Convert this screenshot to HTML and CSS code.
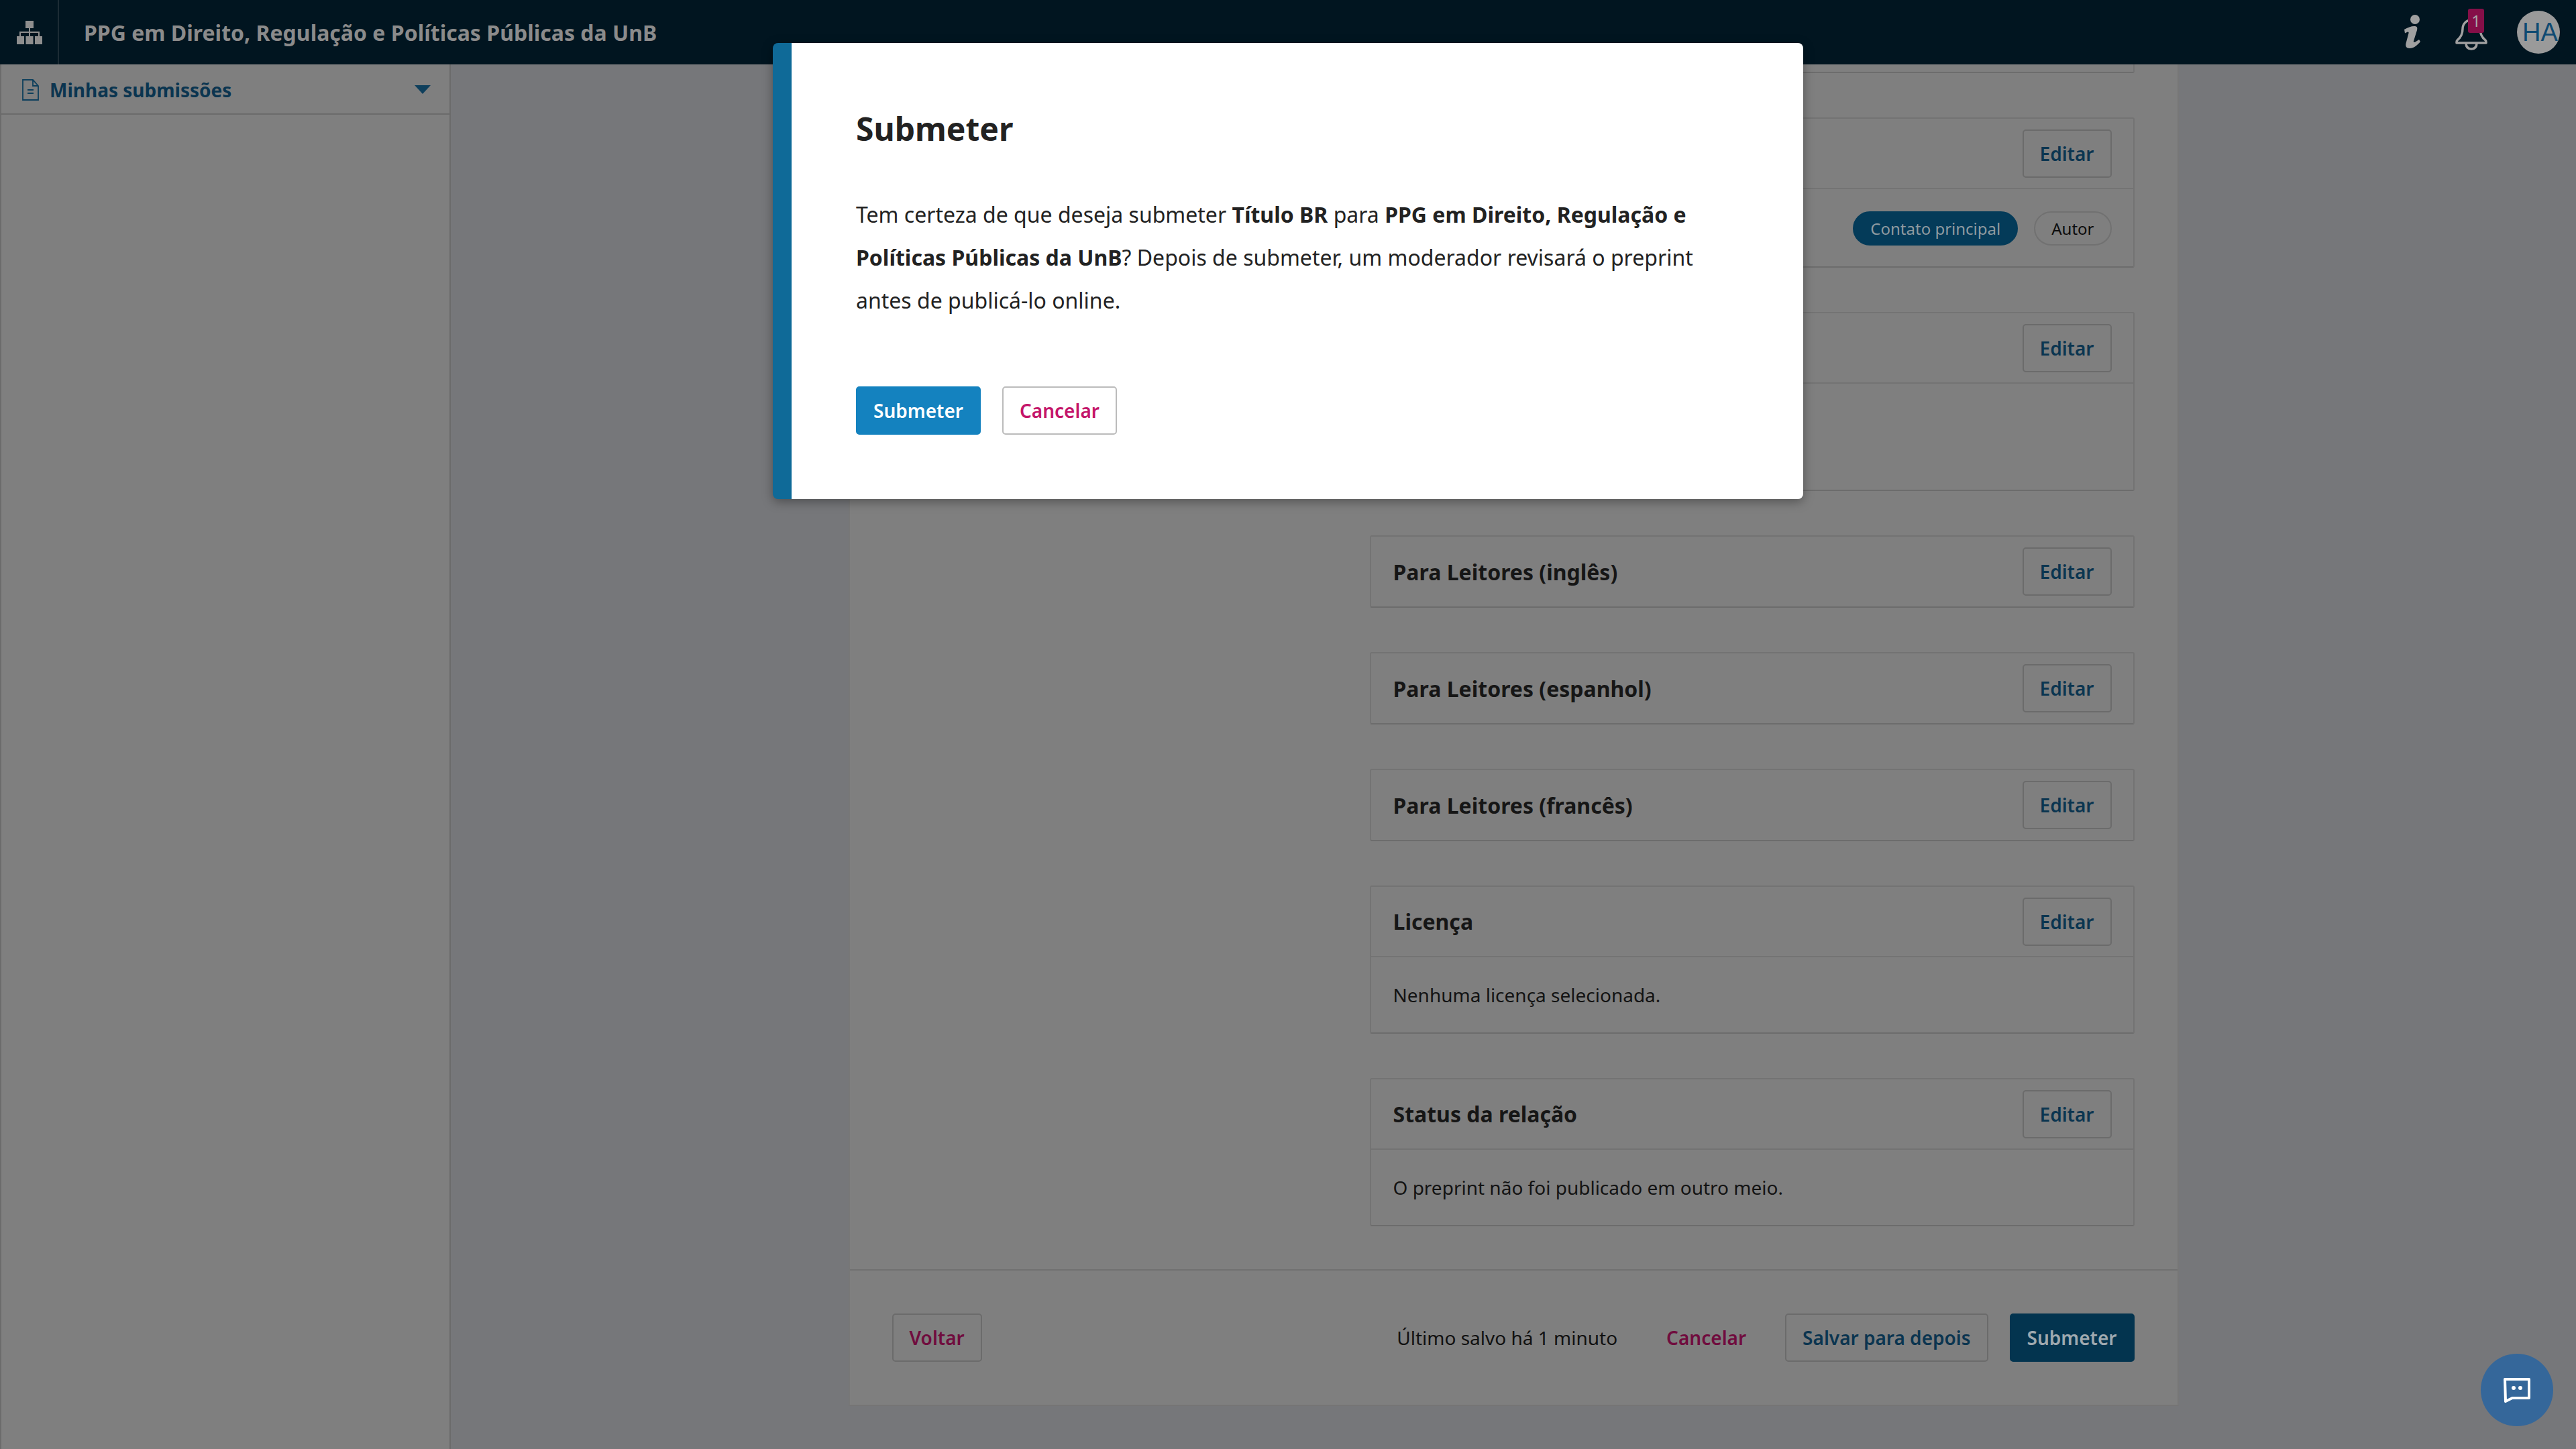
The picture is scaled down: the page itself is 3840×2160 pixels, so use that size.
FILE: index.html
```html
<!DOCTYPE html>
<html lang="pt-BR">
  <head>
    <meta charset="UTF-8" />
    <title>Submeter</title>
    <link rel="stylesheet" href="styles.css">
  </head>
  <body>
    <div class="app">
      <header class="topbar">
        <div class="topbar-sitemap">
          <svg width="38" height="35" viewBox="0 0 38 35" fill="#8e8e8e">
            <rect x="13" y="0" width="12" height="11"/>
            <rect x="0" y="23" width="11" height="12"/>
            <rect x="13.5" y="23" width="11" height="12"/>
            <rect x="27" y="23" width="11" height="12"/>
            <path d="M18 11h2v5h14v7h-2v-5H20v5h-2v-5H6v5H4v-7h14z"/>
          </svg>
        </div>
        <div class="topbar-title">PPG em Direito, Regulação e Políticas Públicas da UnB</div>
        <div class="topbar-tools">
          <svg class="icon-info" width="24" height="52" viewBox="0 0 24 52" fill="#a0a0a0">
            <circle cx="16" cy="7" r="7"/>
            <path d="M0 22c5-3 10-5 15-5 4 0 5 2 4 6l-5 16c-.6 2 .5 2.500 2.500 1.500L22 37l2 3c-5 6-10 10-16 10-5 0-6.500-3-5.500-7.500l4-15c.4-1.800-.5-2.400-2-1.800L1 27.500z"/>
          </svg>
          <div class="bell">
            <svg width="48" height="48" viewBox="0 0 48 48" fill="none" stroke="#a0a0a0" stroke-width="3.500" stroke-linejoin="round">
              <path d="M24 3c-8 0-13 6-13 13 0 8-3 13-8 17-1 1-1 2-1 3v1h44v-1c0-1 0-2-1-3-5-4-8-9-8-17 0-7-5-13-13-13z"/>
              <path d="M16 37c0 6 3 9 8 9s8-3 8-9"/>
            </svg>
            <span class="bell-count">1</span>
          </div>
          <div class="avatar">HA</div>
        </div>
      </header>

      <div class="workspace">
        <nav class="sidebar">
          <div class="side-row">
            <svg class="side-doc" width="27" height="32" viewBox="0 0 27 32" fill="none" stroke="#0e3f5c" stroke-width="1.800">
              <path d="M2 1h15l8 9v21H2z"/>
              <path d="M17 1v9h8"/>
              <path d="M9 16h9M9 21h9"/>
            </svg>
            <span class="side-label">Minhas submissões</span>
            <span class="side-caret"></span>
          </div>
        </nav>

        <main class="main">
          <div class="panel">
            <div class="review">
              <div class="card card-stub"></div>

              <section class="card card-contrib">
                <div class="card-head"><button class="btn btn-edit">Editar</button></div>
                <div class="card-pills">
                  <span class="pill pill-main">Contato principal</span>
                  <span class="pill">Autor</span>
                </div>
              </section>

              <section class="card card-blank">
                <div class="card-head"><button class="btn btn-edit">Editar</button></div>
              </section>

              <section class="card">
                <div class="card-head head-only">
                  <h3>Para Leitores (inglês)</h3>
                  <button class="btn btn-edit">Editar</button>
                </div>
              </section>
              <section class="card">
                <div class="card-head head-only">
                  <h3>Para Leitores (espanhol)</h3>
                  <button class="btn btn-edit">Editar</button>
                </div>
              </section>
              <section class="card">
                <div class="card-head head-only">
                  <h3>Para Leitores (francês)</h3>
                  <button class="btn btn-edit">Editar</button>
                </div>
              </section>

              <section class="card">
                <div class="card-head">
                  <h3>Licença</h3>
                  <button class="btn btn-edit">Editar</button>
                </div>
                <div class="card-body">Nenhuma licença selecionada.</div>
              </section>
              <section class="card">
                <div class="card-head">
                  <h3>Status da relação</h3>
                  <button class="btn btn-edit">Editar</button>
                </div>
                <div class="card-body">O preprint não foi publicado em outro meio.</div>
              </section>
            </div>

            <footer class="panel-foot">
              <button class="btn btn-back">Voltar</button>
              <div class="foot-right">
                <span class="saved">Último salvo há 1 minuto</span>
                <button class="btn btn-link">Cancelar</button>
                <button class="btn btn-edit">Salvar para depois</button>
                <button class="btn btn-primary">Submeter</button>
              </div>
            </footer>
          </div>
        </main>
      </div>
    </div>

    <div class="modal-layer">
      <div class="modal">
        <h2>Submeter</h2>
        <p>Tem certeza de que deseja submeter <b>Título BR</b> para <b>PPG em Direito, Regulação e Políticas Públicas da UnB</b>? Depois de submeter, um moderador revisará o preprint antes de publicá-lo online.</p>
        <div class="modal-actions">
          <button class="btn modal-ok">Submeter</button>
          <button class="btn modal-cancel">Cancelar</button>
        </div>
      </div>
    </div>

    <div class="chat">
      <svg width="42" height="38" viewBox="0 0 42 38" fill="none">
        <path d="M3 3h36v28H14L4 36z" stroke="#fff" stroke-width="4" stroke-linejoin="round"/>
        <circle cx="16" cy="16" r="3" fill="#fff"/>
        <circle cx="26" cy="16" r="3" fill="#fff"/>
      </svg>
    </div>
  </body>
</html>
```

FILE: styles.css
```css
html,
body {
  margin: 0;
  height: 100%;
  overflow: hidden;
}
body {
  background-color: #76777a;
  color: #111;
  font-family: "Noto Sans", "Open Sans", sans-serif;
  font-size: 28px;
}
button {
  font-family: inherit;
}
h2,
h3,
p {
  margin: 0;
}

.app {
  height: 2160px;
  display: flex;
  flex-direction: column;
}

/* top bar */
.topbar {
  height: 96px;
  flex: none;
  display: flex;
  align-items: center;
  background-color: #011520;
}
.topbar-sitemap {
  width: 88px;
  height: 96px;
  padding-left: 25px;
  box-sizing: border-box;
  display: flex;
  align-items: center;
  border-right: 2px solid #1c2c35;
}
.topbar-title {
  margin-left: 37px;
  font-size: 32px;
  font-weight: 700;
  color: #8b8b8b;
}
.topbar-tools {
  margin-left: auto;
  margin-right: 24px;
  display: flex;
  align-items: center;
}
.icon-info {
  margin-right: 52px;
}
.bell {
  position: relative;
  width: 48px;
  height: 48px;
  margin-right: 44px;
  margin-top: 6px;
}
.bell-count {
  position: absolute;
  left: 19px;
  top: -14px;
  width: 24px;
  height: 36px;
  border-radius: 3px;
  background-color: #850f48;
  color: #a8a8a8;
  font-size: 24px;
  line-height: 36px;
  text-align: center;
}
.avatar {
  width: 64px;
  height: 64px;
  border-radius: 50%;
  overflow: hidden;
  background-color: #9a9a9a;
  color: #0f4a72;
  font-family: "Liberation Sans", sans-serif;
  font-size: 38px;
  line-height: 64px;
  padding-left: 8px;
  box-sizing: border-box;
  white-space: nowrap;
}

.workspace {
  flex: 1;
  display: flex;
  min-height: 0;
}

/* side menu */
.sidebar {
  width: 672px;
  flex: none;
  box-sizing: border-box;
  background-color: #7f7f7f;
  border-left: 2px solid #6b6b6b;
  border-right: 2px solid #6b6b6b;
}
.side-row {
  height: 75px;
  box-sizing: border-box;
  display: flex;
  align-items: center;
  padding: 2px 28px 0 30px;
  border-bottom: 2px solid #6b6b6b;
}
.side-doc {
  margin-right: 15px;
}
.side-label {
  font-size: 28px;
  font-weight: 700;
  color: #0b3550;
}
.side-caret {
  margin-left: auto;
  border-left: 12px solid transparent;
  border-right: 12px solid transparent;
  border-top: 13px solid #0e3f5c;
}

/* review panel */
.main {
  flex: 1;
  display: flex;
  justify-content: center;
  align-items: flex-start;
}
.panel {
  width: 1983px;
  box-sizing: border-box;
  background-color: #7f7f7f;
  border-left: 2px solid #777;
  border-right: 2px solid #777;
  border-bottom: 2px solid #757575;
}
.review {
  width: 1140px;
  margin-left: auto;
  margin-right: 64px;
  display: flex;
  flex-direction: column;
  gap: 66px;
}
.card {
  border: 2px solid #737373;
  border-bottom-color: #6c6c6c;
  border-radius: 3px;
}
.card-stub {
  height: 11px;
  border-top: 0;
  border-radius: 0 0 3px 3px;
}
.card-contrib {
  height: 224px;
  box-sizing: border-box;
}
.card-blank {
  height: 267px;
  box-sizing: border-box;
}
.card-head {
  height: 105px;
  box-sizing: border-box;
  display: flex;
  align-items: center;
  padding: 0 32px 0 33px;
  border-bottom: 2px solid #737373;
}
.card-head .btn {
  margin-left: auto;
}
.head-only {
  height: 104px;
  border-bottom: 0;
}
.card-head h3 {
  font-size: 32px;
  font-weight: 700;
  color: #161616;
}
.card-body {
  padding: 24px 32px 24px 33px;
  line-height: 64px;
  color: #131313;
}
.card-pills {
  display: flex;
  justify-content: flex-end;
  gap: 24px;
  padding: 33px 32px 0;
}
.pill {
  height: 51px;
  box-sizing: border-box;
  padding: 0 24px;
  border: 2px solid #717171;
  border-radius: 26px;
  font-size: 24px;
  line-height: 47px;
  color: #0c0c0c;
}
.pill-main {
  background-color: #043b59;
  border-color: #043b59;
  color: #8f9aa0;
}

/* buttons */
.btn {
  height: 72px;
  box-sizing: border-box;
  padding: 0 24px;
  border: 2px solid #6b6b6b;
  border-radius: 5px;
  background-color: transparent;
  font-size: 28px;
  font-weight: 600;
}
.btn-edit {
  color: #0b3550;
}
.btn-back {
  color: #700c3e;
}
.btn-link {
  border-color: transparent;
  color: #700c3e;
}
.btn-primary {
  background-color: #03344f;
  border-color: #03344f;
  color: #9fa9af;
}

.panel-foot {
  margin-top: 64px;
  border-top: 2px solid #707070;
  padding: 64px 64px 64px 63px;
  display: flex;
  align-items: center;
}
.foot-right {
  margin-left: auto;
  display: flex;
  align-items: center;
  gap: 32px;
}
.saved {
  color: #111;
  margin-right: 15px;
}

/* submit dialog */
.modal-layer {
  position: absolute;
  left: 0;
  top: 0;
  right: 0;
  display: flex;
  justify-content: center;
  padding-top: 64px;
}
.modal {
  width: 1536px;
  height: 680px;
  box-sizing: border-box;
  padding: 96px 96px 0;
  background-color: #fff;
  border-left: 28px solid #0f6a98;
  border-radius: 8px;
  box-shadow: 0 4px 16px rgba(0, 0, 0, 0.35);
  color: #222;
}
.modal h2 {
  font-size: 48px;
  line-height: 64px;
  font-weight: 700;
}
.modal p {
  margin-top: 64px;
  font-size: 32px;
  line-height: 64px;
}
.modal-actions {
  margin-top: 96px;
  display: flex;
  gap: 32px;
}
.modal-ok {
  background-color: #1482bf;
  border-color: #1482bf;
  color: #fff;
}
.modal-cancel {
  background-color: #fff;
  border-color: #bbb;
  color: #c4156a;
}

.chat {
  position: absolute;
  right: 34px;
  bottom: 34px;
  width: 108px;
  height: 108px;
  border-radius: 50%;
  background-color: #35679a;
  display: flex;
  align-items: center;
  justify-content: center;
}
```
